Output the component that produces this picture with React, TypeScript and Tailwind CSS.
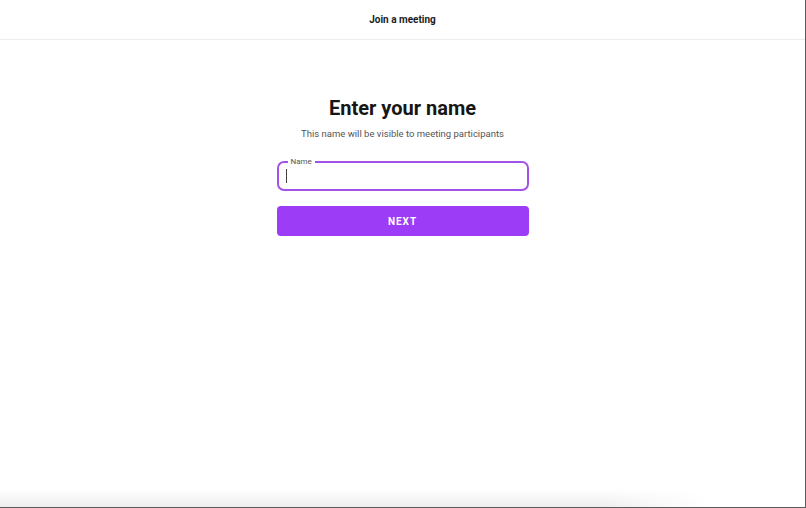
import React from "react";

export default function App() {
  return (
    <div
      className="w-[806px] h-[508px] bg-white flex flex-col overflow-hidden border-r border-b border-[#5a5a5a]"
      style={{ fontFamily: "Roboto, 'Liberation Sans', sans-serif" }}
    >
      <div className="h-[40px] shrink-0 flex items-center justify-center border-b border-[#ececec]">
        <span className="text-[10px] font-bold text-[#1c1c1c]">Join a meeting</span>
      </div>
      <div className="flex-1 flex flex-col items-center pt-[54px]">
        <h1 className="text-[20px] leading-[28px] font-bold text-[#161616]">Enter your name</h1>
        <p className="mt-[6px] text-[9.5px] leading-[12px] text-[#555]">
          This name will be visible to meeting participants
        </p>
        <div className="relative mt-[21px] w-[252px] h-[30px] rounded-[7px] border-2 border-[#a253e6] flex items-center px-[7px]">
          <span className="absolute -top-[6px] left-[9px] bg-white px-[3px] text-[8px] leading-[10px] text-[#555]">
            Name
          </span>
          <span className="w-[1px] h-[14px] bg-[#444]" />
        </div>
        <button className="mt-[15px] w-[252px] h-[30px] rounded-[4px] bg-[#9d3cf6] text-white text-[10px] font-bold tracking-[1px]">
          NEXT
        </button>
      </div>
      <div className="h-[18px] shrink-0 bg-gradient-to-b from-white to-[#eeeeee] [mask-image:linear-gradient(to_right,black_75%,transparent_88%)]" />
    </div>
  );
}
